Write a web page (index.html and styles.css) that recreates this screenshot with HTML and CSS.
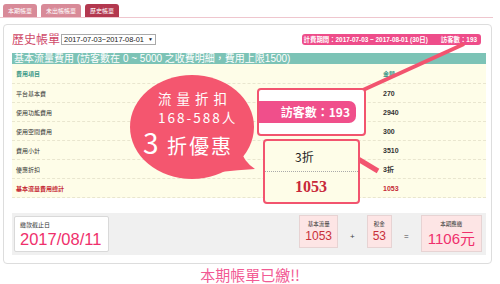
FILE: index.html
```html
<!DOCTYPE html>
<html lang="zh-Hant">
<head>
  <meta charset="UTF-8">
  <meta name="viewport" content="width=device-width, initial-scale=1.0">
  <title>歷史帳單</title>
  <link rel="stylesheet" href="styles.css">
</head>
<body>
  <div class="tabs">
    <span class="tab">本期帳單</span>
    <span class="tab">未出帳帳單</span>
    <span class="tab active">歷史帳單</span>
  </div>

  <div class="card">
    <div class="card-head">
      <h1>歷史帳單</h1>
      <span class="period-select">2017-07-03~2017-08-01 <i>▼</i></span>
      <span class="period-tag"><span>計費期間：2017-07-03 ~ 2017-08-01 (30日)</span><span>訪客數：193</span></span>
    </div>

    <div class="section-title">基本流量費用 (訪客數在 0 ~ 5000 之收費明細，費用上限1500)</div>
    <div class="fees">
      <div class="row head"><span>費用項目</span><span>金額</span></div>
      <div class="row"><span>平台基本費</span><span class="amt">270</span></div>
      <div class="row"><span>使用功能費用</span><span class="amt">2940</span></div>
      <div class="row"><span>使用空間費用</span><span class="amt">300</span></div>
      <div class="row"><span>費用小計</span><span class="amt">3510</span></div>
      <div class="row"><span>優惠折扣</span><span class="amt">3折</span></div>
      <div class="row total"><span>基本流量費用總計</span><span class="amt">1053</span></div>
    </div>

    <div class="summary">
      <div class="due">
        <span>繳款截止日</span>
        <strong>2017/08/11</strong>
      </div>
      <div class="totals">
        <div class="tbox"><span>基本流量</span><strong>1053</strong></div>
        <em>+</em>
        <div class="tbox"><span>稅金</span><strong>53</strong></div>
        <em>=</em>
        <div class="tbox grand"><span>本期應繳</span><strong>1106<small>元</small></strong></div>
      </div>
    </div>
  </div>

  <p class="paid">本期帳單已繳!!</p>

  <!-- promo callouts drawn over the bill -->
  <svg class="overlay" width="500" height="284" viewBox="0 0 500 284">
    <ellipse cx="192" cy="127" rx="62" ry="52" fill="#f4566f"/>
    <path d="M220 172 Q238 170 255 169 Q243 161 241 150 Z" fill="#f4566f"/>
    <line x1="464" y1="44" x2="363" y2="90" stroke="#f2546f" stroke-width="4"/>
    <line x1="358" y1="159" x2="378" y2="171" stroke="#f2546f" stroke-width="5"/>
  </svg>

  <div class="bubble-text">
    <div class="l1">流量折扣</div>
    <div class="l2">168-588人</div>
    <div class="l3"><b>3</b> 折優惠</div>
  </div>

  <div class="callout visitors"><span>訪客數：193</span></div>

  <div class="callout discount">
    <div class="rate">3折</div>
    <div class="sum">1053</div>
  </div>
</body>
</html>
```

FILE: styles.css
```css
* {
  box-sizing: border-box;
}
body {
  margin: 0;
  width: 500px;
  height: 284px;
  overflow: hidden;
  position: relative;
  font-family: "Liberation Sans", "Noto Sans CJK TC", sans-serif;
  color: #333;
  background: #fff;
}

/* tabs */
.tabs {
  display: flex;
  gap: 4px;
  padding: 4px 0 0 3px;
  margin-right: 7px;
  border-bottom: 1px solid #efc6ce;
}
.tab {
  height: 13px;
  padding: 0 5px;
  font-family: "Noto Sans CJK TC", sans-serif;
  font-size: 6px;
  line-height: 13px;
  color: #fff;
  background: #d88a98;
  border-radius: 3px 3px 0 0;
}
.tab.active {
  background: #b3384f;
}

/* card */
.card {
  margin: 6px 8px 0 3px;
  border: 1px solid #ddd;
  border-radius: 4px;
  padding: 0 5px 8px 8px;
}
.card-head {
  height: 28px;
  display: flex;
  align-items: center;
}
.card-head h1 {
  margin: 0;
  font: normal 12px/16px "Noto Sans CJK TC", serif;
  color: #cf4a6a;
}
.period-select {
  margin-left: 1px;
  width: 95px;
  height: 11px;
  padding: 0 2px;
  display: flex;
  align-items: center;
  justify-content: space-between;
  border: 1px solid #a9a9a9;
  font-size: 7.4px;
  color: #222;
}
.period-select i {
  font-style: normal;
  font-size: 5px;
}
.period-tag {
  margin-left: auto;
  margin-right: 5px;
  height: 11px;
  padding: 0 4px 0 2px;
  display: flex;
  gap: 13px;
  line-height: 11px;
  background: #ee4d8a;
  color: #fff;
  font-size: 6.4px;
  font-weight: bold;
  border-radius: 3px;
}

.section-title {
  height: 11px;
  padding-left: 2px;
  background: #7cc3b6;
  color: #fff;
  font-size: 10px;
  line-height: 11px;
  white-space: nowrap;
}

/* fee table */
.fees {
  background: #fefde8;
}
.row {
  height: 19px;
  padding-left: 4px;
  display: grid;
  grid-template-columns: 367px 1fr;
  align-items: center;
  border-bottom: 1px dashed #e9e6cf;
  font-size: 6px;
}
.row.head {
  height: 20px;
  color: #3f9a8a;
  font-weight: bold;
}
.amt {
  font-size: 7px;
  font-weight: bold;
}
.row.total {
  color: #c52a36;
  font-weight: bold;
}

/* summary */
.summary {
  margin-top: 15px;
  height: 42px;
  padding: 3px 4px 0 2px;
  display: flex;
  background: #f0f0f0;
}
.due {
  width: 95px;
  height: 36px;
  padding: 4px 0 0 5px;
  background: #fff;
  border: 1px solid #d9d9d9;
  border-radius: 2px;
}
.due span {
  display: block;
  font-size: 6px;
  line-height: 8px;
}
.due strong {
  display: block;
  font: normal 16.5px/20px "Liberation Sans", sans-serif;
  color: #ef2f6c;
}
.totals {
  margin-left: auto;
  margin-top: -1px;
  display: flex;
  align-items: flex-start;
}
.tbox {
  height: 33px;
  padding: 4px 5px 0;
  display: flex;
  flex-direction: column;
  align-items: center;
  background: #fde5e5;
  border: 1px solid #e7d3d3;
}
.tbox span {
  font-size: 5.5px;
  line-height: 9px;
}
.tbox strong {
  font-weight: normal;
  font-size: 12px;
  line-height: 15px;
  color: #c8303a;
}
.tbox.grand {
  height: 37px;
  padding: 4px 6px 0;
}
.tbox.grand strong {
  font-size: 15px;
  line-height: 18px;
  color: #ef2f6c;
}
.tbox.grand small {
  font-family: "Noto Sans CJK TC", sans-serif;
  font-size: 15px;
}
.totals em {
  align-self: center;
  margin: 3px 12px 0;
  font-style: normal;
  font-size: 8px;
  color: #444;
}

.paid {
  margin: 2px 0 0;
  text-align: center;
  font: 15px/18px "Noto Sans CJK TC", serif;
  color: #f25a94;
}

/* promo overlays */
.overlay {
  position: absolute;
  left: 0;
  top: 0;
  pointer-events: none;
}
.bubble-text {
  position: absolute;
  left: 158px;
  top: 88px;
  color: #fff;
  font-family: "Noto Sans CJK TC", sans-serif;
  white-space: nowrap;
}
.bubble-text .l1 {
  font-size: 13.5px;
  line-height: 20px;
  letter-spacing: 5px;
}
.bubble-text .l2 {
  font-size: 13.5px;
  line-height: 19px;
  letter-spacing: 2px;
}
.bubble-text .l3 {
  margin-left: -15px;
  font-size: 20px;
  line-height: 30px;
  letter-spacing: 2px;
}
.bubble-text .l3 b {
  font-weight: normal;
  font-size: 28px;
}
.callout {
  position: absolute;
  border: 2px solid #f2546f;
  border-radius: 4px;
}
.visitors {
  left: 257px;
  top: 88px;
  width: 109px;
  height: 48px;
  padding-top: 11px;
  background: #fff;
}
.visitors span {
  display: block;
  width: 97px;
  height: 22px;
  padding-right: 6px;
  text-align: right;
  line-height: 22px;
  font-family: "Noto Sans CJK TC", sans-serif;
  font-size: 12px;
  font-weight: bold;
  color: #fff;
  background: #f04f8b;
  border-radius: 0 7px 7px 0;
}
.discount {
  left: 263px;
  top: 139px;
  width: 97px;
  height: 65px;
  background: #fefde8;
}
.discount .rate {
  height: 31px;
  padding-left: 30px;
  line-height: 31px;
  font-family: "Noto Sans CJK TC", sans-serif;
  font-size: 12px;
  color: #222;
  border-bottom: 1px dotted #aaa;
}
.discount .sum {
  padding-left: 30px;
  line-height: 30px;
  font: bold 16px/30px "Liberation Serif", serif;
  color: #c8283a;
}
```
